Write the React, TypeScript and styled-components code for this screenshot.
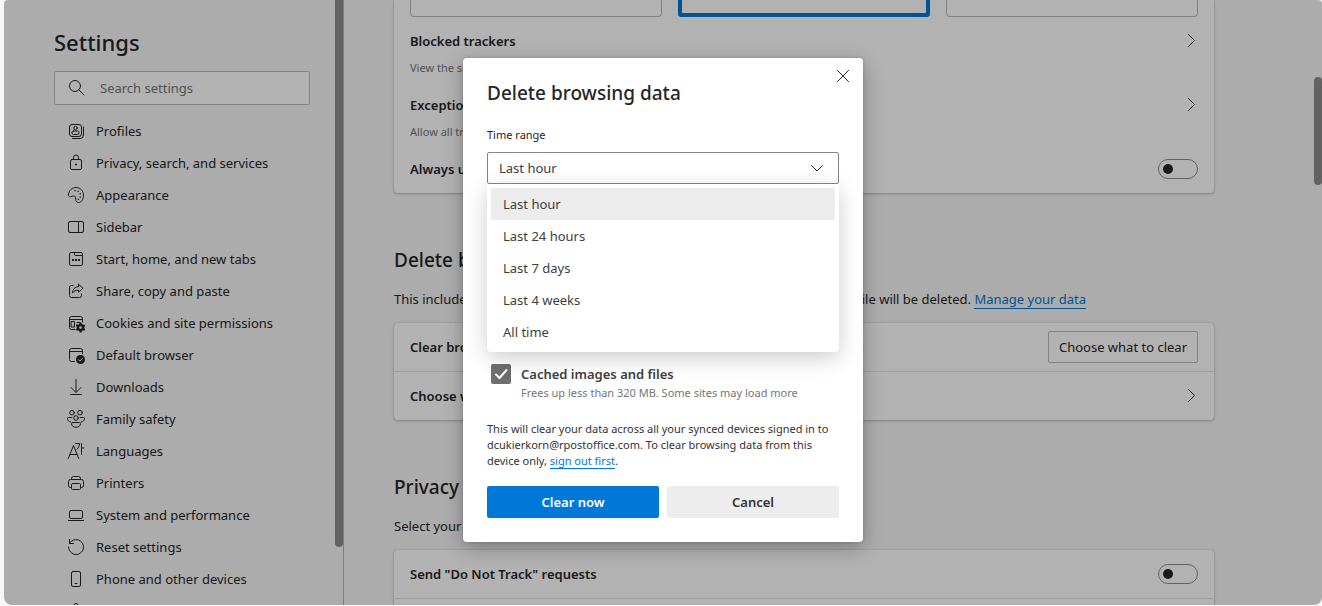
import React from "react";
import styled, { createGlobalStyle } from "styled-components";

const GlobalStyle = createGlobalStyle`
  *, *::before, *::after { box-sizing: border-box; }
  body {
    margin: 0;
    background: #f7f7f7;
    color: #262626;
    font: 13px/20px "Segoe UI", "Noto Sans", "Open Sans", sans-serif;
  }
  button, input, select { font: inherit; color: inherit; }
`;

const Frame = styled.div`
  height: 100vh;
  padding: 0 0 1px 4px;
`;

const Window = styled.div`
  position: relative;
  display: flex;
  height: 100%;
  overflow: hidden;
  border-radius: 4px 4px 8px 8px;
  background: #f6f6f6;
`;

const Sidebar = styled.aside`
  flex: none;
  display: flex;
  justify-content: space-between;
  width: 340px;
  padding-left: 50px;
  border-right: 1px solid #b4b4b4;
`;

const SidebarBody = styled.div`
  width: 256px;
  padding-top: 26px;
`;

const ScrollTrack = styled.div<{ $start: number }>`
  flex: none;
  width: 8px;
  padding-top: ${(p) => p.$start}px;
`;

const ScrollThumb = styled.div<{ $length: number; $top?: boolean }>`
  height: ${(p) => p.$length}px;
  border-radius: ${(p) => (p.$top ? "4px" : "0 0 4px 4px")};
  background: #8d8d8d;
`;

const PageTitle = styled.h1`
  margin: 0 0 13px;
  font-size: 22px;
  line-height: 32px;
  font-weight: 500;
`;

const SearchBox = styled.label`
  display: flex;
  align-items: center;
  gap: 13px;
  height: 34px;
  padding-left: 12px;
  border: 1px solid #bcbcbc;
  border-radius: 2px;
  background: #fff;
`;

const SearchInput = styled.input`
  flex: 1;
  min-width: 0;
  padding: 0;
  border: 0;
  outline: 0;
  background: transparent;
  &::placeholder { color: #767676; opacity: 1; }
`;

const NavList = styled.ul`
  margin: 10px 0 0;
  padding: 0 0 0 12px;
  list-style: none;
`;

const NavLink = styled.a`
  display: flex;
  align-items: center;
  gap: 10px;
  height: 32px;
  color: inherit;
  text-decoration: none;
  white-space: nowrap;
`;

const Glyph = styled.svg`
  flex: none;
  width: 20px;
  height: 20px;
  fill: none;
  stroke: #262626;
  stroke-width: 1;
  stroke-linecap: round;
  stroke-linejoin: round;
  .solid { fill: #262626; stroke: none; }
  .cut { stroke: #f6f6f6; }
  .hole { fill: #f6f6f6; stroke: none; }
`;

const Main = styled.main`
  flex: 1;
  min-width: 0;
  padding: 0 50px;
`;

const Content = styled.div`
  max-width: 820px;
`;

const Card = styled.section<{ $continued?: boolean }>`
  border-radius: ${(p) => (p.$continued ? "0 0 4px 4px" : "4px")};
  background: #fff;
  box-shadow: 0 1px 3px rgba(0, 0, 0, 0.22), 0 0 2px rgba(0, 0, 0, 0.14);
`;

const LevelRow = styled.div`
  display: grid;
  grid-template-columns: repeat(3, 1fr);
  gap: 16px;
  padding: 0 16px 8px;
`;

const Level = styled.div<{ $selected?: boolean }>`
  height: 17px;
  border: ${(p) => (p.$selected ? "4px solid #0078d4" : "1px solid #bcbcbc")};
  border-top: 0;
  border-radius: 0 0 4px 4px;
`;

const SettingRow = styled.div<{ $height: number; $middle?: boolean; $divided?: boolean }>`
  display: flex;
  justify-content: space-between;
  align-items: ${(p) => (p.$middle ? "center" : "flex-start")};
  height: ${(p) => p.$height}px;
  padding: ${(p) => (p.$middle ? "0 16px" : "6px 16px 0")};
  ${(p) => p.$divided && "border-top: 1px solid #e4e4e4;"}
`;

const RowText = styled.div`
  display: grid;
  gap: 9px;
`;

const RowTitle = styled.div`
  font-weight: 600;
`;

const Note = styled.div`
  color: #767676;
  font-size: 11px;
  line-height: 16px;
`;

const IconButton = styled.button`
  display: flex;
  padding: 0;
  border: 0;
  background: transparent;
`;

const ChevronEdge = styled(IconButton)`
  margin-right: -3px;
`;

const SectionTitle = styled.h2`
  margin: 53px 0 15px;
  font-size: 19px;
  line-height: 28px;
  font-weight: 500;
`;

const SectionText = styled.p`
  margin: 0 0 14px;
  white-space: nowrap;
`;

const Link = styled.a`
  color: #0078d4;
  text-decoration: none;
  border-bottom: 1px solid #0078d4;
`;

const OutlineButton = styled.button`
  width: 150px;
  height: 32px;
  padding: 0;
  border: 1px solid #bcbcbc;
  border-radius: 2px;
  background: #fff;
`;

const Toggle = styled.input`
  appearance: none;
  display: flex;
  align-items: center;
  width: 40px;
  height: 20px;
  margin: 0;
  padding-left: 4px;
  border: 1px solid #8d8d8d;
  border-radius: 10px;
  &::before {
    content: "";
    width: 10px;
    height: 10px;
    border-radius: 5px;
    background: #262626;
  }
`;

const Overlay = styled.div`
  position: absolute;
  inset: 0;
  display: flex;
  justify-content: center;
  align-items: flex-start;
  padding-top: 58px;
  background: rgba(0, 0, 0, 0.3);
`;

const Dialog = styled.div`
  position: relative;
  width: 400px;
  padding: 21px 24px 24px;
  border-radius: 4px;
  background: #fff;
  box-shadow: 0 6px 20px rgba(0, 0, 0, 0.28), 0 0 4px rgba(0, 0, 0, 0.14);
`;

const CloseButton = styled(IconButton)`
  position: absolute;
  top: 8px;
  right: 10px;
`;

const DialogTitle = styled.h2`
  margin: 0 0 20px;
  font-size: 19px;
  line-height: 28px;
  font-weight: 500;
  color: #262626;
`;

const FieldLabel = styled.label`
  display: block;
  margin-bottom: 9px;
  font-size: 11px;
  line-height: 16px;
`;

const Picker = styled.div`
  position: relative;
`;

const PickerSelect = styled.select`
  appearance: none;
  display: block;
  width: 100%;
  height: 32px;
  padding: 0 11px;
  border: 1px solid #868686;
  border-radius: 2px;
  background: #fff;
  color: #404040;
`;

const PickerArrow = styled(Glyph)`
  position: absolute;
  top: 6px;
  right: 12px;
  pointer-events: none;
`;

const Menu = styled.ul`
  position: absolute;
  z-index: 1;
  top: 100%;
  left: 0;
  right: 0;
  margin: 0;
  padding: 4px;
  list-style: none;
  border-radius: 0 0 4px 4px;
  background: #fff;
  box-shadow: 0 6px 22px rgba(0, 0, 0, 0.2);
`;

const MenuItem = styled.li<{ $active?: boolean }>`
  height: 32px;
  padding: 0 12px;
  line-height: 32px;
  border-radius: 2px;
  color: #404040;
  background: ${(p) => (p.$active ? "#ececec" : "transparent")};
`;

const DataList = styled.div`
  display: grid;
  gap: 18px;
  padding: 12px 4px 19px;
`;

const DataItem = styled.label`
  display: grid;
  grid-template-columns: 20px 1fr;
  column-gap: 10px;
`;

const CheckHolder = styled.span`
  display: grid;
  width: 20px;
  height: 20px;
  > * { grid-area: 1 / 1; }
`;

const CheckInput = styled.input`
  appearance: none;
  width: 20px;
  height: 20px;
  margin: 0;
  border-radius: 2px;
  background: #6e6e6e;
`;

const Tick = styled(Glyph)`
  stroke: #fff;
  stroke-width: 2;
  pointer-events: none;
`;

const DataNote = styled.span`
  grid-column: 2;
  color: #767676;
  font-size: 11px;
  line-height: 18px;
`;

const DataName = styled.span`
  font-weight: 600;
  color: #404040;
`;

const SyncText = styled.p`
  margin: 0 0 17px;
  font-size: 11px;
  line-height: 16px;
  color: #333;
  white-space: nowrap;
`;

const Actions = styled.div`
  display: grid;
  grid-template-columns: 1fr 1fr;
  gap: 8px;
`;

const ActionButton = styled.button<{ $primary?: boolean }>`
  height: 32px;
  padding: 0;
  border: 0;
  border-radius: 2px;
  font-weight: 600;
  color: ${(p) => (p.$primary ? "#fff" : "#333")};
  background: ${(p) => (p.$primary ? "#0078d7" : "#ededed")};
`;

const navItems: { label: string; icon: React.ReactNode }[] = [
  {
    label: "Profiles",
    icon: (
      <>
        <rect x="3.5" y="3.5" width="12" height="12" rx="2.5" />
        <path d="M17.5 6v8a3.5 3.5 0 0 1-3.5 3.5H6.5" />
        <circle cx="9.5" cy="7" r="1.7" />
        <rect x="6" y="10" width="7" height="3.5" rx="1.5" />
      </>
    ),
  },
  {
    label: "Privacy, search, and services",
    icon: (
      <>
        <rect x="4.5" y="6.5" width="11" height="10" rx="1.5" />
        <path d="M7.5 6.5V4.5a2.5 2.5 0 0 1 5 0v2" />
        <circle className="solid" cx="10" cy="11.5" r="1" />
      </>
    ),
  },
  {
    label: "Appearance",
    icon: (
      <>
        <path d="M2.400 9.500C3 5.200 6.200 2.500 10 2.500c4.400 0 7.500 3.400 7.500 7.500 0 4.500-2.200 7.500-4.900 7.500-2 0-2.900-1.500-2.900-3.400s-.5-3.200-2-3.200c-1.300 0-1.800.9-3.200.9-1.400 0-2.300-.9-2.100-2.300z" />
        <g className="solid">
          <circle cx="9" cy="5.7" r=".8" />
          <circle cx="12.2" cy="6.3" r=".8" />
          <circle cx="14.3" cy="8.8" r=".8" />
          <circle cx="14.3" cy="12" r=".8" />
          <circle cx="12.4" cy="14.3" r=".8" />
        </g>
      </>
    ),
  },
  {
    label: "Sidebar",
    icon: (
      <>
        <rect x="2.5" y="4.5" width="15" height="11" rx="1.5" />
        <path d="M12.5 4.5v11" />
      </>
    ),
  },
  {
    label: "Start, home, and new tabs",
    icon: (
      <>
        <rect x="3.5" y="3.5" width="13" height="13" rx="1.5" />
        <path d="M8.5 3.5V5.5a1 1 0 0 0 1 1h7" />
        <g className="solid">
          <rect x="6" y="10" width="2" height="2" />
          <rect x="9" y="10" width="2" height="2" />
          <rect x="12" y="10" width="2" height="2" />
        </g>
      </>
    ),
  },
  {
    label: "Share, copy and paste",
    icon: (
      <>
        <path d="M7 4.5H5.500a2 2 0 0 0-2 2v8a2 2 0 0 0 2 2h8a2 2 0 0 0 2-2V13" />
        <path d="M12.500 3.200l4.500 4-4.500 4V9.200c-2.800 0-4.600.8-6 2.800.2-3.800 2.300-6.300 6-6.500z" />
      </>
    ),
  },
  {
    label: "Cookies and site permissions",
    icon: (
      <>
        <path d="M9 16.500H5.500a2 2 0 0 1-2-2v-9a2 2 0 0 1 2-2h9a2 2 0 0 1 2 2V9M3.500 6.500h13M11 9.500h3M11 12h-.5" />
        <rect x="5.5" y="8.5" width="3" height="5.5" />
        <path
          className="solid"
          d="M13.600 9.800h1.900l.4 1.300 1.100.6 1.300-.3.9 1.600-.9 1 0 1.200.9 1-.9 1.600-1.300-.3-1.100.6-.4 1.300h-1.900l-.4-1.300-1.100-.6-1.300.3-.9-1.600.9-1V14l-.9-1 .9-1.600 1.300.3 1.100-.6z"
        />
        <circle className="hole" cx="14.5" cy="14.6" r="1.3" />
      </>
    ),
  },
  {
    label: "Default browser",
    icon: (
      <>
        <path d="M8.500 16.500h-3a2 2 0 0 1-2-2v-9a2 2 0 0 1 2-2h9a2 2 0 0 1 2 2V9M3.500 6.500h13" />
        <circle className="solid" cx="14.5" cy="14.5" r="4.5" />
        <path className="cut" d="M12.500 14.700l1.400 1.400 2.700-3" />
      </>
    ),
  },
  {
    label: "Downloads",
    icon: <path d="M10 2.500V15M5 10.500l5 5 5-5M4.500 17.500h11" />,
  },
  {
    label: "Family safety",
    icon: (
      <>
        <circle cx="6" cy="3.7" r="2.3" />
        <circle cx="14" cy="3.7" r="2.3" />
        <circle cx="10" cy="9" r="2.3" />
        <path d="M5.800 8.500H2.500a1 1 0 0 0-1 1c0 1.700 1 3.200 3.200 3.600M14.200 8.500h3.300a1 1 0 0 1 1 1c0 1.700-1 3.200-3.200 3.600" />
        <path d="M6.500 13.500h7a1 1 0 0 1 1 1c0 2.300-1.800 3.800-4.500 3.800s-4.500-1.500-4.500-3.800a1 1 0 0 1 1-1z" />
      </>
    ),
  },
  {
    label: "Languages",
    icon: (
      <path d="M2.300 17.500L7.500 4.500l5.200 13M4 13.500h7M9.500 2.500h4c0 2.300-.8 4.200-2.500 5.700M15.500 2.500v11M15.500 7h2.300" />
    ),
  },
  {
    label: "Printers",
    icon: (
      <>
        <path d="M5.500 14.500h-1a2 2 0 0 1-2-2v-4a2 2 0 0 1 2-2h11a2 2 0 0 1 2 2v4a2 2 0 0 1-2 2h-1" />
        <path d="M5.500 6.500v-1a2 2 0 0 1 2-2h5a2 2 0 0 1 2 2v1" />
        <rect x="5.5" y="10.5" width="9" height="6" rx="1" />
      </>
    ),
  },
  {
    label: "System and performance",
    icon: (
      <>
        <rect x="3.5" y="5.5" width="13" height="8" rx="1.5" />
        <path d="M2.500 15.500h15" />
      </>
    ),
  },
  {
    label: "Reset settings",
    icon: <path d="M3.500 6.300a7.500 7.500 0 1 1-1 3.700M3.500 2.500v4h4" />,
  },
  {
    label: "Phone and other devices",
    icon: (
      <>
        <rect x="5.5" y="2.5" width="9" height="15" rx="1.5" />
        <path d="M9 14.500h2" />
      </>
    ),
  },
  {
    label: "Accessibility",
    icon: (
      <>
        <circle cx="10" cy="4.2" r="1.8" />
        <path d="M4 6.500l4 1.500v3l-2 6.500M16 6.500L12 8v3l2 6.500M8 8h4" />
      </>
    ),
  },
];

const ranges = ["Last hour", "Last 24 hours", "Last 7 days", "Last 4 weeks", "All time"];

const dataTypes = [
  { name: "Browsing history", note: "Includes autocompletions in the address bar." },
  { name: "Download history", note: "Clears the list of downloaded files." },
  { name: "Cookies and other site data", note: "Signs you out of most sites." },
  { name: "Cached images and files", note: "Frees up less than 320 MB. Some sites may load more" },
];

function ChevronRight({ label }: { label: string }) {
  return (
    <ChevronEdge type="button" aria-label={label}>
      <Glyph viewBox="0 0 20 20">
        <path d="M7.500 3.500l6 6-6 6" />
      </Glyph>
    </ChevronEdge>
  );
}

export default function App() {
  return (
    <>
      <GlobalStyle />
      <Frame>
        <Window>
          <Sidebar>
            <SidebarBody>
              <PageTitle>Settings</PageTitle>
              <SearchBox>
                <Glyph viewBox="0 0 20 20">
                  <circle cx="8" cy="8" r="5.5" />
                  <path d="M12 12l5 5" />
                </Glyph>
                <SearchInput type="text" placeholder="Search settings" aria-label="Search settings" />
              </SearchBox>
              <nav>
                <NavList>
                  {navItems.map((item) => (
                    <li key={item.label}>
                      <NavLink href="#">
                        <Glyph viewBox="0 0 20 20">{item.icon}</Glyph>
                        {item.label}
                      </NavLink>
                    </li>
                  ))}
                </NavList>
              </nav>
            </SidebarBody>
            <ScrollTrack $start={0}>
              <ScrollThumb $length={547} />
            </ScrollTrack>
          </Sidebar>

          <Main>
            <Content>
              <Card $continued>
                <LevelRow>
                  <Level />
                  <Level $selected />
                  <Level />
                </LevelRow>
                <SettingRow $height={64}>
                  <RowText>
                    <RowTitle>Blocked trackers</RowTitle>
                    <Note>View the sites that we've blocked from tracking you</Note>
                  </RowText>
                  <ChevronRight label="Blocked trackers" />
                </SettingRow>
                <SettingRow $height={64}>
                  <RowText>
                    <RowTitle>Exceptions</RowTitle>
                    <Note>Allow all trackers on sites you choose</Note>
                  </RowText>
                  <ChevronRight label="Exceptions" />
                </SettingRow>
                <SettingRow $height={40}>
                  <RowTitle as="label" htmlFor="strict">
                    Always use "Strict" tracking prevention when browsing InPrivate
                  </RowTitle>
                  <Toggle id="strict" type="checkbox" role="switch" />
                </SettingRow>
              </Card>

              <SectionTitle>Delete browsing data</SectionTitle>
              <SectionText>
                This includes history, passwords, cookies, and more. Only data from this profile will be deleted.{" "}
                <Link href="#">Manage your data</Link>
              </SectionText>
              <Card>
                <SettingRow $height={48} $middle>
                  <RowTitle>Clear browsing data now</RowTitle>
                  <OutlineButton type="button">Choose what to clear</OutlineButton>
                </SettingRow>
                <SettingRow $height={49} $middle $divided>
                  <RowTitle>Choose what to clear every time you close the browser</RowTitle>
                  <ChevronRight label="Choose what to clear on close" />
                </SettingRow>
              </Card>

              <SectionTitle>Privacy</SectionTitle>
              <SectionText>Select your privacy settings for Microsoft Edge.</SectionText>
              <Card>
                <SettingRow $height={48} $middle>
                  <RowTitle as="label" htmlFor="dnt">
                    Send "Do Not Track" requests
                  </RowTitle>
                  <Toggle id="dnt" type="checkbox" role="switch" />
                </SettingRow>
                <SettingRow $height={49} $middle $divided />
              </Card>
            </Content>
          </Main>
          <ScrollTrack $start={77}>
            <ScrollThumb $length={108} $top />
          </ScrollTrack>

          <Overlay>
            <Dialog role="dialog" aria-labelledby="dialog-title">
              <CloseButton type="button" aria-label="Close">
                <Glyph viewBox="0 0 20 20">
                  <path d="M4.500 4.500l11 11M15.500 4.500l-11 11" />
                </Glyph>
              </CloseButton>
              <DialogTitle id="dialog-title">Delete browsing data</DialogTitle>
              <FieldLabel htmlFor="range">Time range</FieldLabel>
              <Picker>
                <PickerSelect id="range" defaultValue="Last hour">
                  {ranges.map((range) => (
                    <option key={range}>{range}</option>
                  ))}
                </PickerSelect>
                <PickerArrow viewBox="0 0 20 20">
                  <path d="M4.500 7.500l5.500 5.500 5.500-5.500" />
                </PickerArrow>
                <Menu role="listbox" aria-label="Time range">
                  {ranges.map((range, i) => (
                    <MenuItem key={range} role="option" aria-selected={i === 0} $active={i === 0}>
                      {range}
                    </MenuItem>
                  ))}
                </Menu>
              </Picker>
              <DataList>
                {dataTypes.map((item) => (
                  <DataItem key={item.name}>
                    <CheckHolder>
                      <CheckInput type="checkbox" defaultChecked />
                      <Tick viewBox="0 0 20 20">
                        <path d="M5 10.500l3.500 3.500 7-8" />
                      </Tick>
                    </CheckHolder>
                    <DataName>{item.name}</DataName>
                    <DataNote>{item.note}</DataNote>
                  </DataItem>
                ))}
              </DataList>
              <SyncText>
                This will clear your data across all your synced devices signed in to
                <br />
                dcukierkorn@rpostoffice.com. To clear browsing data from this
                <br />
                device only, <Link href="#">sign out first</Link>.
              </SyncText>
              <Actions>
                <ActionButton type="button" $primary>
                  Clear now
                </ActionButton>
                <ActionButton type="button">Cancel</ActionButton>
              </Actions>
            </Dialog>
          </Overlay>
        </Window>
      </Frame>
    </>
  );
}
